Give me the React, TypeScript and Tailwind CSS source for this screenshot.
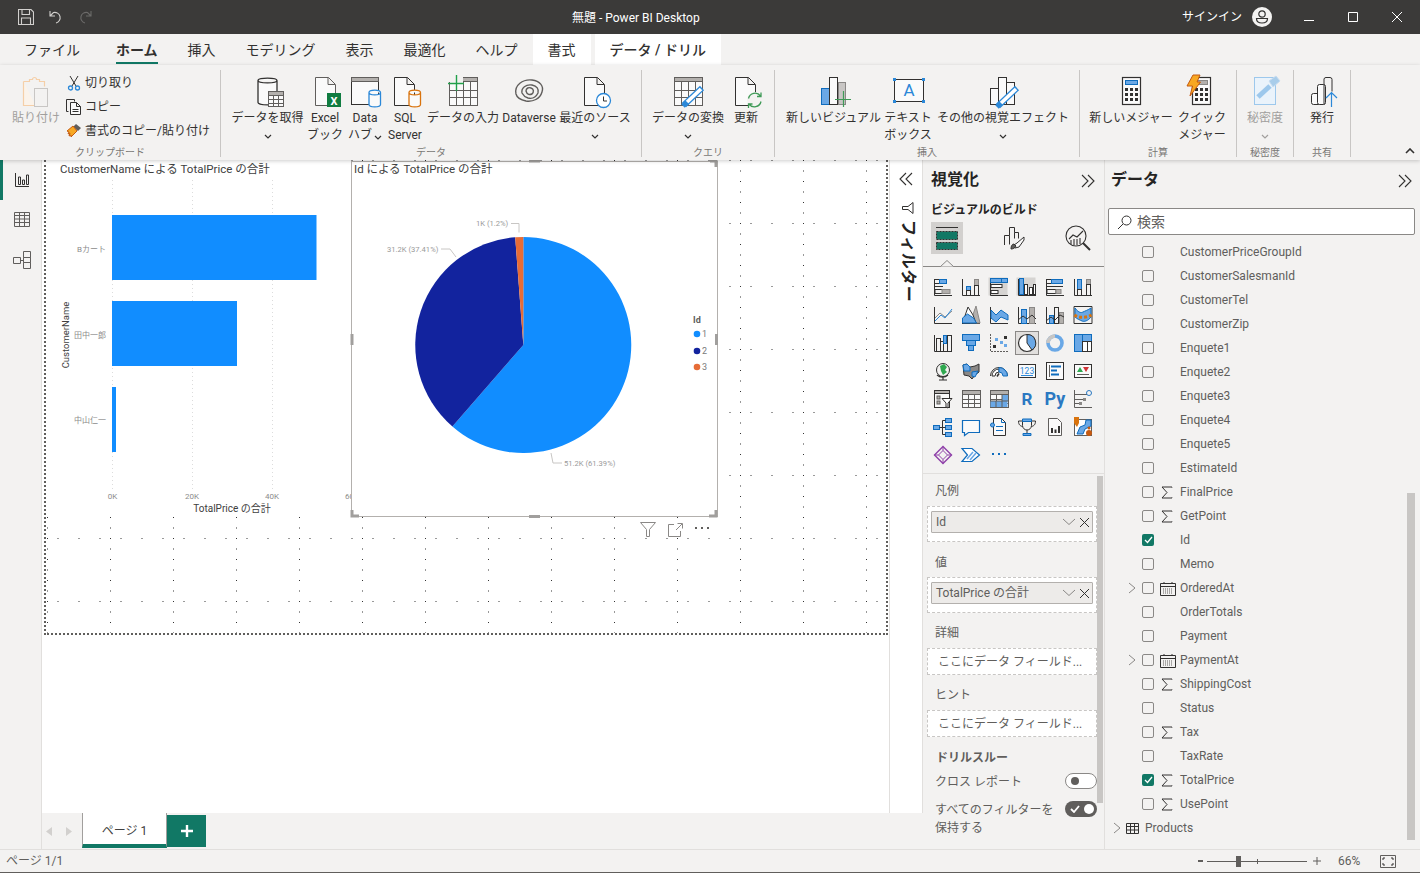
import React from 'react';

const D = '#323130';
const B = '#6aa8e6';
const G = '#b3b0ad';
const A = '#0f6cbd';

const R = ({ x, y, w, h, f = 'none', s }: { x: number; y: number; w: number; h: number; f?: string; s?: string }) => (
  <rect x={x} y={y} width={w} height={h} fill={f} stroke={s} />
);

const Ic = ({ children, size = 32, box = 32, className = '' }: { children: React.ReactNode; size?: number; box?: number; className?: string }) => (
  <svg viewBox={`0 0 ${box} ${box}`} width={size} height={size} fill="none" stroke={D} strokeWidth={1} overflow="visible" className={className}>
    {children}
  </svg>
);

const Doc = ({ x = 5, r = 26, s = D }: { x?: number; r?: number; s?: string }) => (
  <path d={`M${x + 0.5} 1.5h${r - x - 8}l7 7v21h-${r - x - 1}zM${r - 8} 1.5v7h7`} fill="#fafafa" stroke={s} />
);

const Cyl = ({ x, y, w, h, c }: { x: number; y: number; w: number; h: number; c: string }) => (
  <path
    d={`M${x} ${y + 2.5}c0-3.2 ${w}-3.2 ${w} 0v${h - 5}c0 3.2-${w} 3.2-${w} 0zM${x} ${y + 2.5}c0 3.2 ${w} 3.2 ${w} 0`}
    fill="#fafafa"
    stroke={c}
    strokeWidth={1.3}
  />
);

const Tbl = ({ x, y, w, h, c = 4, r = 3, bar = true }: { x: number; y: number; w: number; h: number; c?: number; r?: number; bar?: boolean }) => (
  <g stroke="#605e5c">
    <rect x={x + 0.5} y={y + 0.5} width={w} height={h} fill="#fafafa" />
    {bar && <rect x={x + 0.5} y={y + 0.5} width={w} height={4} fill={G} />}
    {Array.from({ length: c - 1 }).map((_, i) => (
      <path key={i} d={`M${Math.round(x + ((i + 1) * w) / c) + 0.5} ${y + (bar ? 5 : 0)}V${y + h}`} />
    ))}
    {Array.from({ length: r - 1 }).map((_, i) => (
      <path key={i} d={`M${x} ${Math.round(y + (bar ? 5 : 0) + ((i + 1) * (h - (bar ? 5 : 0))) / r) + 0.5}H${x + w}`} />
    ))}
  </g>
);

const Pencil = ({ x1, y1, x2, y2 }: { x1: number; y1: number; x2: number; y2: number }) => (
  <g strokeLinecap="butt">
    <path d={`M${x1} ${y1}L${x2} ${y2}`} stroke="#2b88d8" strokeWidth={6} />
    <path d={`M${x1 + 1} ${y1 - 1}L${x2 - 1} ${y2 + 1}`} stroke="#ffffff" strokeWidth={3.6} />
    <path d={`M${x1 - 1} ${y1 + 1}L${x1 + 3} ${y1 - 3}`} stroke="#2b88d8" strokeWidth={5} />
  </g>
);

const Calc = ({ x, blue }: { x: number; blue: boolean }) => (
  <g>
    <rect x={x + 0.5} y={1.5} width={18} height={27} fill="#fafafa" stroke={D} strokeWidth={1.2} />
    <rect x={x + 3.5} y={4.5} width={12} height={4} fill={blue ? B : G} stroke={blue ? A : '#8a8886'} />
    {[12, 17, 22].map((yy) =>
      [3, 8, 13].map((xx) => <rect key={`${xx}${yy}`} x={x + xx} y={yy} width={3} height={3} fill={D} stroke="none" />)
    )}
  </g>
);

const icons: Record<string, React.ReactNode> = {
  paste: (
    <Ic>
      <path d="M3.5 5.5h6v-2h3a2 2 0 0 1 4 0h3v2h5v5" stroke="#f5cfa8" strokeWidth={1.2} />
      <path d="M3.5 5.5v24h12" stroke="#f5cfa8" strokeWidth={1.2} fill="#fbf3ea" />
      <rect x={14.5} y={12.5} width={13} height={18} fill="#f3f2f1" stroke="#c8c6c4" />
    </Ic>
  ),
  getData: (
    <Ic>
      <Cyl x={6} y={2} w={19} h={27} c={D} />
      <Tbl x={16} y={15} w={15} h={15} c={3} r={3} />
    </Ic>
  ),
  excel: (
    <Ic>
      <Doc x={6} r={27} s="#605e5c" />
      <rect x={18} y={17} width={14} height={14} fill="#107c41" stroke="none" />
      <text x={25} y={28.5} fill="#fff" stroke="none" fontSize={11} fontWeight={700} textAnchor="middle">X</text>
    </Ic>
  ),
  hub: (
    <Ic>
      <rect x={2.5} y={1.5} width={27} height={27} fill="#fafafa" stroke={D} />
      <rect x={2.5} y={1.5} width={27} height={4} fill={G} stroke="#605e5c" />
      <Cyl x={20} y={14} w={11.5} h={17} c="#2b88d8" />
    </Ic>
  ),
  sql: (
    <Ic>
      <Doc x={5} r={26} />
      <Cyl x={20} y={14} w={11.5} h={17} c="#d9730d" />
    </Ic>
  ),
  enter: (
    <Ic>
      <Tbl x={2} y={1} w={28} h={28} c={4} r={3} />
      <rect x={1} y={0} width={15} height={6} fill="#f3f2f1" stroke="none" />
      <path d="M9.500 -1v16M1 7.500h16" stroke="#21a04a" strokeWidth={1.4} />
    </Ic>
  ),
  dataverse: (
    <Ic>
      <path
        d="M3 18C1 9 10 3 19 4c8 1 12 6 10 12-2 7-9 10-16 9-5-1-9-3-10-7zM9 17c-1-5 4-9 10-8 5 1 7 4 6 8-2 4-6 6-10 5-3-1-5-3-6-5zM13 15c0-3 3-4 5-3 3 1 3 4 1 6-2 1-5 1-6-3z"
        stroke="#605e5c"
        strokeWidth={1.4}
      />
    </Ic>
  ),
  recent: (
    <Ic>
      <Doc />
      <circle cx={24.5} cy={24.5} r={7} fill="#fff" stroke="#2b88d8" strokeWidth={1.3} />
      <path d="M24.5 20.5v4.5h3.5" stroke={D} />
    </Ic>
  ),
  transform: (
    <Ic>
      <Tbl x={2} y={1} w={28} h={28} c={4} r={3} />
      <Pencil x1={12} y1={29} x2={30} y2={12} />
    </Ic>
  ),
  refresh: (
    <Ic>
      <Doc />
      <circle cx={25} cy={24} r={8} fill="#f3f2f1" stroke="none" />
      <path d="M18.5 22.5a6.7 6.7 0 0 1 12-2.5M31 25.5a6.7 6.7 0 0 1-12 2.500M31 16.500v4h-4M18.500 32v-4h4" stroke="#3f9a57" strokeWidth={1.3} />
    </Ic>
  ),
  newVisual: (
    <Ic>
      <rect x={3.500} y={12.500} width={8} height={16} fill={B} stroke={A} />
      <rect x={20.500} y={6.500} width={7} height={22} fill="#c8c6c4" stroke="#8a8886" />
      <rect x={11.500} y={1.500} width={8} height={27} fill="#fafafa" stroke={D} />
      <path d="M25.500 15v16M17 23.500h16" stroke="#3f9a57" strokeWidth={1.2} />
    </Ic>
  ),
  textbox: (
    <Ic>
      <rect x={2.500} y={3.500} width={29} height={22} fill="#fafafa" stroke={D} />
      {[[1, 2], [30, 2], [1, 24], [30, 24]].map(([x, y]) => (
        <rect key={`${x}${y}`} x={x} y={y} width={3} height={3} fill="#2b88d8" stroke="none" />
      ))}
      <text x={17} y={20} fill="#2b88d8" stroke="none" fontSize={17} textAnchor="middle">A</text>
    </Ic>
  ),
  other: (
    <Ic>
      <rect x={3.500} y={12.500} width={8} height={16} fill="#fafafa" />
      <rect x={19.500} y={6.500} width={8} height={22} fill="#fafafa" />
      <rect x={11.500} y={1.500} width={8} height={27} fill="#fafafa" />
      <Pencil x1={11} y1={30} x2={30} y2={12} />
    </Ic>
  ),
  measure: (
    <Ic>
      <Calc x={7} blue />
    </Ic>
  ),
  quick: (
    <Ic>
      <Calc x={6} blue={false} />
      <path d="M7 -1h7l-3 7h3.500L4 20l2.500-10H1z" fill="#f7a823" stroke="#c55a11" />
    </Ic>
  ),
  sensitivity: (
    <Ic>
      <rect x={5.500} y={1.500} width={21} height={27} fill="#eaf3fb" stroke="#9dc8ec" />
      <path d="M9 21L21 10" stroke="#9dc8ec" strokeWidth={5} />
      <path d="M20 5l7-5 4 5-7 6z" fill="#a9cdea" stroke="#c7ddf0" />
    </Ic>
  ),
  publish: (
    <Ic>
      <rect x={5.500} y={17.500} width={9} height={11} rx={2} fill="#fafafa" />
      <rect x={11.500} y={8.500} width={8} height={20} rx={2} fill="#fafafa" />
      <path d="M18 28.500V3a2 2 0 0 1 2-1.500h4a2 2 0 0 1 2 2v12" />
      <path d="M25.500 31V17M20 22l5.500-5.500L31 22" stroke="#2b88d8" strokeWidth={1.2} fill="none" />
    </Ic>
  ),
};

const RBtn = ({ w, lines, icon, chevron, dim }: { w: number; lines: string[]; icon: string; chevron?: 'below' | 'inline'; dim?: boolean }) => (
  <div style={{ width: w }} className={`flex flex-col items-center shrink-0 pt-[6px] ${dim ? 'text-[#a19f9d]' : 'text-[#323130]'}`}>
    <div className="h-[34px] w-[32px] shrink-0">{icons[icon]}</div>
    {lines.map((l, i) => (
      <div key={l} className="whitespace-nowrap text-[12px] leading-[17px] flex items-center">
        {l}
        {chevron === 'inline' && i === lines.length - 1 && <Chev cls="ml-[2px] mt-[3px]" />}
      </div>
    ))}
    {chevron === 'below' && (
      <div className="h-[17px] flex items-center">
        <Chev cls="mt-[2px]" c={dim ? '#a19f9d' : '#323130'} />
      </div>
    )}
  </div>
);

const Chev = ({ cls = '', c = '#323130' }: { cls?: string; c?: string }) => (
  <svg width="8" height="5" viewBox="0 0 8 5" fill="none" stroke={c} strokeWidth={1.2} className={cls}>
    <path d="M1 1l3 3 3-3" />
  </svg>
);

const RGroup = ({ w, pl = 0, label, children }: { w: number; pl?: number; label: string; children: React.ReactNode }) => (
  <div style={{ width: w }} className="h-[87px] shrink-0 flex flex-col border-r border-[#c8c6c4]">
    <div style={{ paddingLeft: pl }} className="flex h-[77px] shrink-0">
      {children}
    </div>
    <div className="text-center text-[10px] leading-[11px] text-[#797775] whitespace-nowrap">{label}</div>
  </div>
);

const DblChev = ({ cls = '', flip = false }: { cls?: string; flip?: boolean }) => (
  <svg width="16" height="14" viewBox="0 0 16 14" fill="none" stroke={D} strokeWidth={1.1} className={cls} style={flip ? { transform: 'scaleX(-1)' } : undefined}>
    <path d="M2 1l6 6-6 6M8 1l6 6-6 6" />
  </svg>
);

const I = ({ children }: { children: React.ReactNode }) => (
  <svg viewBox="0 0 20 20" width={20} height={20} fill="none" stroke={D} strokeWidth={1} overflow="visible">
    {children}
  </svg>
);

const Axis = () => <path d="M1.500 2v16.500H19" />;

const gallery: React.ReactNode[] = [
  <I><Axis /><R x={1.500} y={2.500} w={5} h={4} /><R x={6.500} y={2.500} w={7} h={4} f={B} s={A} /><path d="M2 9.500h8" /><R x={2} y={12.500} w={8} h={4} /><R x={9} y={12.500} w={8} h={4} f={G} s="#8a8886" /></I>,
  <I><Axis /><R x={5.500} y={9.500} w={4} h={4} f={B} s={A} /><R x={5.500} y={13.500} w={4} h={5} /><R x={13.500} y={2.500} w={4} h={6} f={G} s="#8a8886" /><R x={13.500} y={8.500} w={4} h={10} /></I>,
  <I><rect x={-0.500} y={0.500} width={19} height={18} fill="#d6d4d2" stroke="none" /><Axis /><R x={1.500} y={1.500} w={11} h={4} f={B} s={A} /><R x={12.500} y={1.500} w={6} h={4} f={B} s={A} /><R x={2} y={7.500} w={11} h={3} f="#fff" /><R x={2} y={13.500} w={7} h={3} f="#fff" /></I>,
  <I><rect x={-0.500} y={0.500} width={19} height={18} fill="#d6d4d2" stroke="none" /><Axis /><R x={2.500} y={1.500} w={4} h={16} f={B} s={A} /><R x={7.500} y={7.500} w={3} h={10} f="#fff" /><R x={12.500} y={10.500} w={3} h={7} f="#fff" /><R x={16.500} y={7.500} w={2} h={10} f="#fff" /></I>,
  <I><Axis /><R x={1.500} y={2.500} w={5} h={4} /><R x={6.500} y={2.500} w={11} h={4} f={B} s={A} /><path d="M2 9.500h16" /><R x={2} y={12.500} w={9} h={4} /><R x={11} y={12.500} w={5} h={4} f={G} s="#8a8886" /></I>,
  <I><Axis /><R x={4.500} y={2.500} w={4} h={10} f={B} s={A} /><R x={4.500} y={12.500} w={4} h={6} /><R x={13.500} y={2.500} w={4} h={5} f={G} s="#8a8886" /><R x={13.500} y={7.500} w={4} h={11} /></I>,
  <I><Axis /><path d="M2 13l5-5 5 4 7-6" stroke="#8a8886" /><path d="M2 16l6-6 4 3 7-9" stroke="#2b88d8" /></I>,
  <I><path d="M1 18.500h18" /><path d="M9 18l6-17 4 17z" fill={G} stroke="#8a8886" /><path d="M1.500 18L7 2l5 8 3 8z" fill="#fff" /><path d="M1.500 18v-5l5-4 6 4 3 5z" fill={B} stroke={A} /></I>,
  <I><Axis /><path d="M2 5l5 5 5-5 7 5v5l-7-3-5 5-5-4z" fill={B} stroke={A} /></I>,
  <I><Axis /><R x={4.500} y={4.500} w={5} h={14} f={B} s={A} /><R x={12.500} y={2.500} w={5} h={16} f={G} s="#8a8886" /><path d="M1 15l5-4 4 3 5-4 4 4" /></I>,
  <I><Axis /><R x={4.500} y={10.500} w={4} h={8} f={B} s={A} /><R x={9.500} y={2.500} w={4} h={16} /><R x={14.500} y={7.500} w={4} h={11} f={G} s="#8a8886" /><path d="M1 16l5-4 4 3 5-5 4 2" /></I>,
  <I><path d="M1 1.500h18v17H1z" /><path d="M2 3c4 5 6 5 8 4s5-2 8-4v9c-3 4-7 5-9 4s-5-2-7-4z" fill={B} stroke={A} /><path d="M1.500 10c4 3 12 3 17 0" stroke="#d9730d" strokeWidth={3} strokeDasharray="3 2" /></I>,
  <I><Axis /><R x={3.500} y={5.500} w={4} h={13} /><R x={7.500} y={8.500} w={3} h={10} /><R x={10.500} y={2.500} w={3} h={8} f={B} s={A} /><R x={14.500} y={2.500} w={4} h={16} /></I>,
  <I><R x={1.500} y={1.500} w={17} h={6} f={B} s={A} /><R x={5.500} y={7.500} w={9} h={5} f={B} s={A} /><R x={7.500} y={12.500} w={5} h={5} f={B} s={A} /></I>,
  <I><path d="M1.500 1v17.500H19" stroke="#605e5c" strokeDasharray="2 1" /><rect x={4} y={12} width={3} height={3} fill={D} stroke="none" /><rect x={6} y={5} width={3} height={3} fill={B} stroke="none" /><rect x={11} y={8} width={3} height={3} fill={B} stroke="none" /><rect x={15} y={3} width={3} height={3} fill={D} stroke="none" /><rect x={15} y={11} width={3} height={3} fill={B} stroke="none" /></I>,
  <I><circle cx={10} cy={10} r={8.500} fill="#fff" stroke="#323130" strokeWidth={1.200} /><path d="M10 10V1.500A8.500 8.500 0 0 1 15 17z" fill={B} stroke={D} /></I>,
  <I><circle cx={10} cy={10} r={7} stroke={B} strokeWidth={3.600} /><path d="M3 10a7 7 0 0 1 7-7" stroke="#c8c6c4" strokeWidth={3.600} /></I>,
  <I><R x={1.500} y={1.500} w={8} h={17} f={B} s={A} /><R x={9.500} y={1.500} w={9} h={7} f={B} s={A} /><R x={9.500} y={8.500} w={5} h={10} f="#fff" s={D} /><R x={14.500} y={8.500} w={4} h={10} f="#fff" s={D} /></I>,
  <I><circle cx={10} cy={9} r={6.500} /><path d="M7 5l4-2 3 3-2 3 2 2-4 3-2-4z" fill="#2fa84f" stroke="none" /><path d="M4 14a8 8 0 0 0 11 0M10 16v2.500M6 19h8" strokeWidth={1.200} /></I>,
  <I><path d="M2 4l4-1 3 3 5-1 4-2v8l-4 3-3 4-3-3-5-1z" fill="#8a8886" stroke={D} /><path d="M2 4l4-1 3 3v4H3zM11 11l6-1-3 6-3-1z" fill={B} stroke={A} /></I>,
  <I><path d="M1.500 15a8.500 8.500 0 0 1 17 0" strokeWidth={1} /><path d="M3 15a7 7 0 0 1 7-7v3a4 4 0 0 0-4 4z" fill="#fff" /><path d="M10 6.500a8.500 8.500 0 0 1 8.500 8.500H14a4 4 0 0 0-4-4z" fill={B} stroke={A} /><path d="M8 15.500l2-3" strokeWidth={1.500} /></I>,
  <I><R x={1.500} y={3.500} w={17} h={13} f="#fafafa" /><text x={10} y={13} fontSize={8.500} fill="#2b88d8" stroke="none" textAnchor="middle">123</text><path d="M4 14.500h12" stroke="#2b88d8" /></I>,
  <I><R x={1.500} y={1.500} w={17} h={17} f="#fafafa" /><path d="M4.500 4v12" stroke="#605e5c" /><path d="M6 5.500h10M6 9.500h6M6 13.500h8" stroke={A} strokeWidth={2} /></I>,
  <I><R x={1.500} y={3.500} w={17} h={13} f="#fafafa" /><path d="M4 11l3-5 3 5z" fill="#2fa84f" stroke="none" /><path d="M10 6h6l-3 5z" fill="#d13438" stroke="none" /><path d="M4 13.500h12" stroke="#605e5c" /></I>,
  <I><R x={1.500} y={1.500} w={15} h={17} f="#fafafa" /><R x={1.500} y={1.500} w={15} h={3} f={G} /><R x={4} y={7} w={3} h={3} f={G} s="#605e5c" /><R x={4} y={12} w={3} h={3} f={G} s="#605e5c" /><path d="M9 9.500h10l-4 4.500v5l-2-1v-4z" fill="#fff" /></I>,
  <I><Tbl x={1} y={1} w={18} h={17} c={3} r={3} /></I>,
  <I><Tbl x={1} y={1} w={18} h={17} c={3} r={3} /><rect x={13} y={6} width={6} height={6} fill={B} stroke="none" /><rect x={1.500} y={12} width={17} height={6} fill={B} stroke="none" /><path d="M7 12v6M13 6v12M1 12h18" stroke="#605e5c" /></I>,
  <span className="text-[17px] leading-none font-bold text-[#2b79c2]">R</span>,
  <span className="text-[18px] leading-none font-bold text-[#2b79c2]">Py</span>,
  <I><path d="M1.500 1v17.500H19M2 5.500h12M2 10.500h9M2 14.500h5" stroke="#605e5c" /><circle cx={16} cy={4} r={2.500} stroke="#2b79c2" /><rect x={10} y={9} width={3} height={3} fill="#8a8886" stroke="none" /><rect x={6} y={13} width={3} height={3} fill="#8a8886" stroke="none" /></I>,
  <I><R x={0.500} y={8.500} w={6} h={4} f={B} s={A} /><R x={12.500} y={1.500} w={6} h={4} f={B} s={A} /><R x={12.500} y={8.500} w={6} h={4} f={B} s={A} /><R x={12.500} y={15.500} w={6} h={4} f={B} s={A} /><path d="M6.500 10.500h6M9.500 3.500v14M9.500 3.500h3M9.500 17.500h3" stroke={D} /></I>,
  <I><path d="M1.500 3.500h17v12H7.500l-4 3v-3h-2z" fill="#fafafa" stroke={A} strokeWidth={1.200} /></I>,
  <I><path d="M4.500 1.500h8l4 4v13h-12z" fill="#fafafa" /><path d="M12.500 1.500v4h4M7 9.500h7M7 13.500h7" stroke={A} /><circle cx={3.500} cy={8} r={2} fill={B} stroke={A} /></I>,
  <I><path d="M5.500 2.500h9v6a4.500 4.500 0 0 1-9 0zM5 4H1.500c0 4 2 5 4 5.500M15 4h3.500c0 4-2 5-4 5.500M10 13v3" /><path d="M5.500 2h9v2.500h-9zM6 16.500h8v2H6z" fill={B} stroke={A} /></I>,
  <I><path d="M3.500 1.500h9l4 4v13h-13z" fill="#fafafa" stroke="#605e5c" /><path d="M6 11h2v5H6zM9.500 12.500h2V16h-2zM13 9h2v7h-2z" fill={D} stroke="none" /></I>,
  <I><R x={1.500} y={2.500} w={17} h={16} f="#fff" s="#605e5c" /><path d="M4 17l3-7 5-2 1-5h5v6l-6 3-2 5z" fill={B} stroke={A} /><path d="M1 0h5v6l-2 4-3-4z" fill="#d9730d" stroke="none" /><circle cx={16} cy={16} r={3} fill="#c55a11" stroke="none" /><circle cx={16} cy={11} r={1.500} fill="#c55a11" stroke="none" /></I>,
  <I><path d="M10 1.500l8.500 8.500-8.500 8.500L1.500 10z" stroke="#8e3fa8" strokeWidth={1.400} /><path d="M10 5.500l4.500 4.500-4.500 4.500L5.500 10z M10 1.500v4M10 14.500v4M1.500 10h4M14.500 10h4" stroke="#8e3fa8" /></I>,
  <I><path d="M1 3.500h10l7.500 6.500-7.500 6.500H1l5.500-6.500z" fill="#fff" stroke={A} strokeWidth={1.200} /><path d="M6 14l6-7M9 15l6-7" stroke={B} strokeWidth={1.600} /></I>,
  <I><g fill="#0f6cbd" stroke="none"><rect x={3} y={8} width={2} height={2} /><rect x={9} y={8} width={2} height={2} /><rect x={15} y={8} width={2} height={2} /></g></I>,
];

const Well = ({ item }: { item: string }) => (
  <div className="h-[36px] w-[170px] border border-dashed border-[#c8c6c4] bg-white pt-[4px] px-[3px]">
    <div className="h-[22px] bg-[#edebe9] border border-[#b3b0ad] rounded-[1px] flex items-center pl-[4px] pr-[2px] text-[12px] text-[#605e5c]">
      <span className="flex-1">{item}</span>
      <svg width="14" height="8" viewBox="0 0 14 8" fill="none" stroke="#8a8886" className="mr-[3px]">
        <path d="M1 1l6 5.500L13 1" />
      </svg>
      <svg width="11" height="11" viewBox="0 0 11 11" fill="none" stroke={D}>
        <path d="M1 1l9 9M10 1l-9 9" />
      </svg>
    </div>
  </div>
);

const EmptyWell = () => (
  <div className="h-[27px] w-[170px] border border-dashed border-[#c8c6c4] bg-white pl-[10px] pt-px flex items-center text-[12px] text-[#605e5c] whitespace-nowrap">
    ここにデータ フィールド...
  </div>
);

const Sect = ({ cls, children }: { cls: string; children: React.ReactNode }) => (
  <div className={`text-[12px] leading-[14px] text-[#605e5c] ${cls}`}>{children}</div>
);

const Sigma = () => (
  <svg width="12" height="13" viewBox="0 0 12 13" fill="none" stroke={D} strokeWidth={1}>
    <path d="M11 1.500V1H1l5 5.500L1 12h10v-.500" />
  </svg>
);

const Cal = () => (
  <svg width="16" height="15" viewBox="0 0 16 15" fill="none" stroke={D} strokeWidth={1}>
    <path d="M.500 2.500h15v12H.500zM.500 5.500h15M4 1v2M12 1v2" />
    <path d="M3 8h10M3 10h10M3 12h10" stroke="#605e5c" strokeDasharray="1 1" />
  </svg>
);

const Arrow = () => (
  <svg width="8" height="12" viewBox="0 0 8 12" fill="none" stroke="#8a8886" strokeWidth={1}>
    <path d="M1 1l6 5-6 5" />
  </svg>
);

type Field = { n: string; icon?: 'sigma' | 'cal'; on?: boolean; exp?: boolean };

const fields: Field[] = [
  { n: 'CustomerPriceGroupId' },
  { n: 'CustomerSalesmanId' },
  { n: 'CustomerTel' },
  { n: 'CustomerZip' },
  { n: 'Enquete1' },
  { n: 'Enquete2' },
  { n: 'Enquete3' },
  { n: 'Enquete4' },
  { n: 'Enquete5' },
  { n: 'EstimateId' },
  { n: 'FinalPrice', icon: 'sigma' },
  { n: 'GetPoint', icon: 'sigma' },
  { n: 'Id', on: true },
  { n: 'Memo' },
  { n: 'OrderedAt', icon: 'cal', exp: true },
  { n: 'OrderTotals' },
  { n: 'Payment' },
  { n: 'PaymentAt', icon: 'cal', exp: true },
  { n: 'ShippingCost', icon: 'sigma' },
  { n: 'Status' },
  { n: 'Tax', icon: 'sigma' },
  { n: 'TaxRate' },
  { n: 'TotalPrice', icon: 'sigma', on: true },
  { n: 'UsePoint', icon: 'sigma' },
];

const FieldRow = ({ f }: { f: Field }) => (
  <div className="h-6 flex items-center text-[12px] text-[#605e5c]">
    <div className="w-[37px] pl-[23px] flex items-center">{f.exp && <Arrow />}</div>
    {f.on ? (
      <div className="w-3 h-3 rounded-[2px] bg-[#117865] flex items-center justify-center">
        <svg width="9" height="8" viewBox="0 0 9 8" fill="none" stroke="#fff" strokeWidth={1.300}>
          <path d="M1 4l2.500 2.500L8 1" />
        </svg>
      </div>
    ) : (
      <div className="w-3 h-3 rounded-[2px] border border-[#8a8886]" />
    )}
    <div className="w-[26px] flex items-center pl-[6px]">
      {f.icon === 'sigma' && <span className="pl-[1px] flex"><Sigma /></span>}
      {f.icon === 'cal' && <Cal />}
    </div>
    <span>{f.n}</span>
  </div>
);

const BarChart = () => (
  <svg viewBox="46 160 305 357" className="absolute inset-0 w-full h-full" fontFamily="Roboto,'Noto Sans CJK JP',sans-serif">
    {[112, 192, 272].map((x) => (
      <path key={x} d={`M${x + 0.500} 180V490`} stroke="#dcdcdc" strokeDasharray="1 3" />
    ))}
    <rect x={112} y={215} width={204.500} height={65} fill="#118DFF" />
    <rect x={112} y={301} width={125} height={65} fill="#118DFF" />
    <rect x={112} y={387} width={4} height={65} fill="#118DFF" />
    <g fontSize={8} fill="#8c8c8c" textAnchor="end">
      <text x={106} y={252}>Bカート</text>
      <text x={106} y={338}>田中一郎</text>
      <text x={106} y={423}>中山仁一</text>
    </g>
    <g fontSize={8} fill="#8c8c8c" textAnchor="middle">
      <text x={112.500} y={499}>0K</text>
      <text x={192} y={499}>20K</text>
      <text x={272} y={499}>40K</text>
      <text x={352} y={499}>60K</text>
    </g>
    <text x={232} y={512} fontSize={10} fill="#404040" textAnchor="middle">TotalPrice の合計</text>
    <text transform="translate(69 335) rotate(-90)" fontSize={9.500} fill="#404040" textAnchor="middle">CustomerName</text>
  </svg>
);

const PieChart = () => (
  <svg viewBox="351 160 368 358" className="absolute -left-px -top-[2px] w-[368px] h-[358px]" overflow="visible" fontFamily="Roboto,'Noto Sans CJK JP',sans-serif">
    <path d="M523.300 345V237A108 108 0 1 1 452.400 426.500Z" fill="#118DFF" />
    <path d="M523.300 345L452.400 426.500A108 108 0 0 1 515.200 237.300Z" fill="#12239E" />
    <path d="M523.300 345L515.200 237.300A108 108 0 0 1 523.300 237Z" fill="#E66C37" />
    <g fontSize={7.600} fill="#9a9a9a">
      <text x={476} y={226}>1K (1.2%)</text>
      <text x={387} y={252}>31.2K (37.41%)</text>
      <text x={564} y={466}>51.2K (61.39%)</text>
    </g>
    <g fill="none" stroke="#c8c6c4">
      <path d="M511 223.500h8v9" />
      <path d="M441 249h9l6 8" />
      <path d="M551 453l2 10h9" />
    </g>
    <text x={693} y={323} fontSize={9} fontWeight={700} fill="#605e5c">Id</text>
    {[[334, '#118DFF', '1'], [351, '#12239E', '2'], [367, '#E66C37', '3']].map(([y, c, t]) => (
      <g key={t as string}>
        <circle cx={697} cy={y as number} r={3.300} fill={c as string} />
        <text x={702} y={(y as number) + 3} fontSize={9} fill="#7a7a7a">{t}</text>
      </g>
    ))}
    <g fill="none" stroke="#a19f9d" strokeWidth={3}>
      <path d="M352 510v6h7M709 516h7v-6M710 161h6v6" />
      <path d="M529 161h11M529 516.500h11M352 334v11M716.500 334v11" />
    </g>
  </svg>
);

export default function App() {
  return (
    <div className="h-screen w-full overflow-hidden flex flex-col bg-[#f3f2f1] font-['Roboto','Noto_Sans_CJK_JP',sans-serif] text-[#323130]">
      {/* title bar */}
      <div className="h-[34px] shrink-0 bg-[#3b3a39] flex items-center relative text-white">
        <div className="flex items-center pl-[18px] gap-[15px]">
          <svg width="16" height="16" viewBox="0 0 16 16" fill="none" stroke="#d2d0ce" strokeWidth={1.100}>
            <path d="M.500 .500h12.500l2.500 2.500v12.500H.500zM4 .500v5h7.500v-5M3.500 15.500v-6.500h9v6.500" />
          </svg>
          <svg width="14" height="15" viewBox="0 0 14 15" fill="none" stroke="#d2d0ce" strokeWidth={1.100}>
            <path d="M1 1v5h5M1 6l3.500-3.500a5 5 0 1 1 2.500 10.500" />
          </svg>
          <svg width="14" height="15" viewBox="0 0 14 15" fill="none" stroke="#6b6a69" strokeWidth={1.100}>
            <path d="M13 1v5H8M13 6L9.500 2.500A5 5 0 1 0 7 13" />
          </svg>
        </div>
        <div className="absolute left-[572px] top-[9px] leading-[18px] text-[12px] whitespace-nowrap">無題 - Power BI Desktop</div>
        <div className="ml-auto flex items-center">
          <span className="text-[12px] mr-[10px]">サインイン</span>
          <svg width="20" height="20" viewBox="0 0 20 20" className="mr-[32px]">
            <circle cx="10" cy="10" r="10" fill="#f3f2f1" />
            <circle cx="10" cy="7" r="3.200" fill="none" stroke="#323130" strokeWidth={1.200} />
            <path d="M4.500 11.500h11c0 3-2.500 4.500-5.500 4.500s-5.500-1.500-5.500-4.500z" fill="none" stroke="#323130" strokeWidth={1.200} />
          </svg>
          <svg width="10" height="10" viewBox="0 0 10 10" stroke="#fff" className="mr-[34px]"><path d="M0 8.500h10" /></svg>
          <svg width="10" height="10" viewBox="0 0 10 10" stroke="#fff" fill="none" className="mr-[34px]"><path d="M.500 .500h9v9h-9z" /></svg>
          <svg width="10" height="10" viewBox="0 0 10 10" stroke="#fff" className="mr-[18px]"><path d="M0 0l10 10M10 0L0 10" /></svg>
        </div>
      </div>

      {/* tabs */}
      <div className="h-[31px] shrink-0 flex items-stretch text-[14px] pl-[9px] text-[#323130]">
        <div className="px-[15px] pt-[2px] flex items-center">ファイル</div>
        <div className="ml-[6px] px-[15px] pt-[2px] flex items-center font-bold relative">
          ホーム
          <div className="absolute left-[15px] right-[15px] bottom-[1px] h-[2px] bg-[#117865]" />
        </div>
        {['挿入', 'モデリング', '表示', '最適化', 'ヘルプ'].map((t) => (
          <div key={t} className="px-[15px] pt-[2px] flex items-center">{t}</div>
        ))}
        <div className="px-[15px] pt-[2px] flex items-center bg-white">書式</div>
        <div className="ml-[4px] px-[15px] pt-[2px] flex items-center bg-white font-medium">データ / ドリル</div>
      </div>

      {/* ribbon */}
      <div className="h-[95px] shrink-0 flex pt-[5px] relative z-10 shadow-[0_1px_4px_rgba(0,0,0,0.2)] bg-[#f3f2f1]">
        <RGroup w={221} pl={10} label="クリップボード">
          <RBtn w={52} icon="paste" lines={['貼り付け']} dim />
          <div className="flex flex-col ml-[4px] pt-px text-[12px]">
            <div className="h-6 flex items-center gap-[3px]">
              <svg width="16" height="16" viewBox="0 0 16 16" fill="none" stroke={D}>
                <path d="M4 1l6 10M12 1L6 11" />
                <circle cx="4.500" cy="13" r="2" stroke="#2b88d8" strokeWidth={1.300} />
                <circle cx="11.500" cy="13" r="2" stroke="#2b88d8" strokeWidth={1.300} />
              </svg>
              切り取り
            </div>
            <div className="h-6 flex items-center gap-[3px]">
              <svg width="16" height="16" viewBox="0 0 16 16" fill="none" stroke={D}>
                <path d="M2.500 12.500h-2V.500h8v2" />
                <path d="M4.500 3.500h6l4 4v8h-10zM10.500 3.500v4h4M6.500 10.500h6M6.500 12.500h6" fill="#fafafa" />
              </svg>
              コピー
            </div>
            <div className="h-6 flex items-center gap-[3px]">
              <svg width="16" height="16" viewBox="0 0 16 16" fill="none">
                <path d="M10 1l5 4-3 3-5-4z" fill="#605e5c" />
                <path d="M7 3L1 8l2 1-1 2 2-1-1 3 2-1 0 2 6-6z" fill="#f7a823" stroke="#c55a11" />
              </svg>
              書式のコピー/貼り付け
            </div>
          </div>
        </RGroup>
        <RGroup w={421} pl={10} label="データ">
          <RBtn w={73} icon="getData" lines={['データを取得']} chevron="below" />
          <RBtn w={42} icon="excel" lines={['Excel', 'ブック']} />
          <RBtn w={38} icon="hub" lines={['Data', 'ハブ']} chevron="inline" />
          <RBtn w={42} icon="sql" lines={['SQL', 'Server']} />
          <RBtn w={74} icon="enter" lines={['データの入力']} />
          <RBtn w={58} icon="dataverse" lines={['Dataverse']} />
          <RBtn w={74} icon="recent" lines={['最近のソース']} chevron="below" />
        </RGroup>
        <RGroup w={133} pl={10} label="クエリ">
          <RBtn w={72} icon="transform" lines={['データの変換']} chevron="below" />
          <RBtn w={44} icon="refresh" lines={['更新']} />
        </RGroup>
        <RGroup w={305} pl={10} label="挿入">
          <RBtn w={97} icon="newVisual" lines={['新しいビジュアル']} />
          <RBtn w={52} icon="textbox" lines={['テキスト', 'ボックス']} />
          <RBtn w={138} icon="other" lines={['その他の視覚エフェクト']} chevron="below" />
        </RGroup>
        <RGroup w={157} pl={9} label="計算">
          <RBtn w={84} icon="measure" lines={['新しいメジャー']} />
          <RBtn w={58} icon="quick" lines={['クイック', 'メジャー']} />
        </RGroup>
        <RGroup w={57} label="秘密度">
          <RBtn w={56} icon="sensitivity" lines={['秘密度']} chevron="below" dim />
        </RGroup>
        <RGroup w={57} label="共有">
          <RBtn w={56} icon="publish" lines={['発行']} />
        </RGroup>
        <svg width="10" height="6" viewBox="0 0 10 6" fill="none" stroke={D} strokeWidth={1.600} className="absolute left-[1405px] top-[83px]">
          <path d="M1 5l4-4 4 4" />
        </svg>
      </div>

      {/* main */}
      <div className="flex-1 min-h-0 flex">
        {/* left rail */}
        <div className="w-[42px] shrink-0 border-r border-[#e1dfdd] relative flex flex-col items-center pt-[12px] pl-[2px]">
          <div className="absolute left-0 top-0 w-[3px] h-[40px] bg-[#117865]" />
          <svg width="16" height="16" viewBox="0 0 16 16" fill="none" stroke={D}>
            <path d="M1.500 1v13.500H15M4.500 5v7.500h2V5zM8.500 8v4.500h2V8zM12.500 3v9.500h2V3z" />
          </svg>
          <svg width="16" height="16" viewBox="0 0 16 16" fill="none" stroke="#605e5c" className="mt-[24px]">
            <path d="M.500 .500h15v14h-15zM.500 3.500h15M.500 7h15M.500 10.500h15M5.500 .500v14M10.500 .500v14" />
          </svg>
          <svg width="18" height="18" viewBox="0 0 18 18" fill="none" stroke="#605e5c" className="mt-[23px]">
            <path d="M.500 6.500h7v6h-7zM10.500 .500h7v6h-7zM10.500 6.500h7v5h-7zM10.500 11.500h7v6h-7zM7.500 9.500h3" />
          </svg>
        </div>

        {/* canvas + filter strip + page tabs */}
        <div className="w-[881px] shrink-0 flex flex-col">
          <div className="flex-1 min-h-0 flex bg-white">
            <div className="w-[847px] shrink-0 pl-[2px] overflow-hidden">
              <div className="relative w-[844px] h-[475px] border-x-2 border-b-2 border-dotted border-[#605e5c]">
                <svg className="absolute inset-0 w-full h-full">
                  <defs>
                    <pattern id="dots" x="1" y="0" width="63" height="63" patternUnits="userSpaceOnUse">
                      {[0, 10.500, 21, 31.500, 42, 52.500].map((y) => (
                        <rect key={y} x={0} y={y} width={1} height={1} fill="#333" />
                      ))}
                      {[10.500, 31.500, 52.500].map((x) => (
                        <rect key={x} x={x} y={0} width={1} height={1} fill="#333" />
                      ))}
                    </pattern>
                  </defs>
                  <rect width="100%" height="100%" fill="url(#dots)" />
                </svg>
                <div className="absolute left-0 top-0 w-[305px] h-[357px] bg-white overflow-hidden">
                  <BarChart />
                  <div className="absolute left-[14px] top-[0px] text-[11.500px] leading-[18px] whitespace-nowrap text-[#404040]">
                    CustomerName による TotalPrice の合計
                  </div>
                </div>
                <div className="absolute left-[305px] top-[1px] w-[367px] h-[356px] bg-white border border-[#b3b0ad]">
                  <PieChart />
                  <div className="absolute left-[2px] top-[-2px] text-[11.500px] leading-[18px] whitespace-nowrap text-[#404040]">
                    Id による TotalPrice の合計
                  </div>
                </div>
                <div className="absolute left-[594px] top-[362px] flex items-center gap-[12px] bg-white">
                  <svg width="16" height="15" viewBox="0 0 16 15" fill="none" stroke="#8a8886">
                    <path d="M.500 .500h15L9.500 7.500v7h-3v-7z" />
                  </svg>
                  <svg width="15" height="14" viewBox="0 0 15 14" fill="none" stroke="#8a8886">
                    <path d="M6 1.500H.500v12h12V8M8 7l6-6M9.500 .500h5v5" />
                  </svg>
                  <svg width="15" height="15" viewBox="0 0 15 15" fill="#605e5c">
                    <rect x="0" y="5" width="2" height="2" />
                    <rect x="6" y="5" width="2" height="2" />
                    <rect x="12" y="5" width="2" height="2" />
                  </svg>
                </div>
              </div>
            </div>
            <div className="w-[34px] shrink-0 border-x border-[#e1dfdd] flex flex-col items-center pt-[12px]">
              <DblChev flip />
              <svg width="12" height="12" viewBox="0 0 12 12" fill="none" stroke={D} className="mt-[16px] rotate-90 ml-[4px]">
                <path d="M.500 1h11L7.500 6v5.500h-3V6z" />
              </svg>
              <div className="mt-[6px] ml-[4px] text-[16px] font-bold text-[#252423] tracking-[0.500px] [writing-mode:vertical-rl] [text-orientation:sideways]">フィルター</div>
            </div>
          </div>
          <div className="h-[36px] shrink-0 flex items-start">
            <div className="w-[40px] h-full flex items-center pl-[4px] gap-[14px]">
              <svg width="6" height="9" viewBox="0 0 6 9" fill="#d2d0ce"><path d="M6 0v9L0 4.500z" /></svg>
              <svg width="6" height="9" viewBox="0 0 6 9" fill="#d2d0ce"><path d="M0 0v9l6-4.500z" /></svg>
            </div>
            <div className="w-[85px] h-[35px] bg-white border-x border-[#a19f9d] border-b-[4px] border-b-[#117865] flex items-center justify-center text-[12px] text-[#404040] pt-[4px]">
              ページ 1
            </div>
            <div className="w-[39px] h-[32px] mt-[2px] bg-[#117865] flex items-center justify-center">
              <svg width="12" height="12" viewBox="0 0 12 12" stroke="#fff" strokeWidth={2.400}>
                <path d="M6 0v12M0 6h12" />
              </svg>
            </div>
          </div>
        </div>

        {/* visualizations pane */}
        <div className="w-[182px] shrink-0 border-r border-[#e1dfdd] relative">
          <div className="h-[38px] pt-[2px] flex items-center justify-between pl-[8px] pr-[8px]">
            <span className="text-[16px] font-bold text-[#252423]">視覚化</span>
            <DblChev cls="mt-[1px]" />
          </div>
          <div className="h-[22px] pl-[8px] pt-px flex items-center text-[12px] font-bold text-[#252423]">ビジュアルのビルド</div>
          <div className="mt-[2px] h-[32px] flex items-center pl-[8px]">
            <div className="w-[32px] h-[32px] bg-[#d2d0ce] flex items-center justify-center">
              <svg width="24" height="24" viewBox="0 0 24 24" fill="none">
                <path d="M1 1.500h22" stroke={D} />
                <rect x="1.500" y="5.500" width="21" height="8" fill="#117865" stroke={D} strokeDasharray="2 1" />
                <rect x="1.500" y="16.500" width="21" height="7" fill="#117865" stroke={D} strokeDasharray="2 1" />
              </svg>
            </div>
            <svg width="24" height="24" viewBox="0 0 24 24" fill="none" stroke={D} className="ml-[39px]">
              <path d="M2.500 19V9.500h5V1.500h5v5h4v6" />
              <path d="M7.500 9.500v9M12.500 6.500v6" />
              <path d="M22 11l-7 6-3 2 1 3 4-1 5-7z" fill="#fafafa" />
              <path d="M9 23c2 0 4-1 5-3l-2-2c-2 0-3 2-3 5z" fill="#605e5c" />
            </svg>
            <svg width="26" height="26" viewBox="0 0 26 26" fill="none" stroke={D} strokeWidth={1.100} className="ml-[39px]">
              <circle cx="11" cy="11" r="10" />
              <path d="M18 18l7 7" strokeWidth={2} />
              <path d="M4 14l4-4 4 2 6-6M6 19v-4M9 20v-6M12 20v-6M15 19v-6" />
            </svg>
          </div>
          <div className="mt-[12px] h-px bg-[#8a8886] relative">
            <svg width="18" height="7" viewBox="0 0 18 7" className="absolute left-[15px] -top-[6px]" fill="#f3f2f1" stroke="#8a8886">
              <path d="M0 6.500h2.500L9 .500l6.500 6H18" />
            </svg>
          </div>
          <div className="mt-[6px] ml-[6px] grid grid-cols-[repeat(6,28px)] auto-rows-[28px]">
            {gallery.map((g, i) => (
              <div key={i} className="flex items-center justify-center">
                {i === 15 ? (
                  <div className="w-6 h-6 bg-[#e1dfdd] border border-[#8a8886] flex items-center justify-center">{g}</div>
                ) : (
                  g
                )}
              </div>
            ))}
          </div>
          <div className="mt-[4px] h-px bg-[#e1dfdd]" />
          <div className="pl-[4px]">
            <Sect cls="pt-[10px] pl-[8px]">凡例</Sect>
            <div className="mt-[8px]"><Well item="Id" /></div>
            <Sect cls="mt-[14px] pl-[8px]">値</Sect>
            <div className="mt-[7px]"><Well item="TotalPrice の合計" /></div>
            <Sect cls="mt-[13px] pl-[8px]">詳細</Sect>
            <div className="mt-[8px]"><EmptyWell /></div>
            <Sect cls="mt-[13px] pl-[8px]">ヒント</Sect>
            <div className="mt-[8px]"><EmptyWell /></div>
            <Sect cls="mt-[14px] pl-[9px] font-bold">ドリルスルー</Sect>
            <div className="mt-[8px] h-[16px] w-[170px] pl-[8px] flex items-center justify-between text-[12px] leading-[16px] text-[#605e5c]">
              <span className="pt-[2px]">クロス レポート</span>
              <div className="w-[32px] h-[16px] rounded-full border border-[#8a8886] bg-white flex items-center pl-[5px]">
                <div className="w-[8px] h-[8px] rounded-full bg-[#605e5c]" />
              </div>
            </div>
            <div className="mt-[12px] w-[170px] pl-[8px] flex items-start justify-between text-[12px] leading-[18px] text-[#605e5c]">
              <div>すべてのフィルターを<br />保持する</div>
              <div className="w-[32px] h-[16px] rounded-full bg-[#605e5c] flex items-center justify-between pl-[5px] pr-[3px]">
                <svg width="10" height="8" viewBox="0 0 10 8" fill="none" stroke="#fff" strokeWidth={1.800}>
                  <path d="M1 4l3 3 5-6" />
                </svg>
                <div className="w-[10px] h-[10px] rounded-full bg-white" />
              </div>
            </div>
          </div>
          <div className="absolute left-[174px] top-[316px] w-[6px] h-[327px] bg-[#c8c6c4]" />
        </div>

        {/* data pane */}
        <div className="flex-1 min-w-0 relative">
          <div className="h-[38px] pt-[2px] flex items-center justify-between pl-[6px] pr-[7px]">
            <span className="text-[16px] font-bold text-[#252423]">データ</span>
            <DblChev cls="mt-[1px]" />
          </div>
          <div className="mt-[10px] ml-[3px] w-[307px] h-[27px] bg-white border border-[#8a8886] rounded-[2px] flex items-center pl-[8px] pt-px text-[14px] text-[#605e5c]">
            <svg width="15" height="15" viewBox="0 0 15 15" fill="none" stroke={D} className="mr-[5px]">
              <circle cx="9.500" cy="5.500" r="4.500" />
              <path d="M6 9l-5 5" />
            </svg>
            検索
          </div>
          <div className="mt-[5px]">
            {fields.map((f) => (
              <FieldRow key={f.n} f={f} />
            ))}
            <div className="h-6 flex items-center text-[12px] text-[#605e5c]">
              <div className="pl-[8px] w-[21px] flex"><Arrow /></div>
              <svg width="13" height="11" viewBox="0 0 13 11" fill="none" stroke={D} className="mr-[6px]">
                <path d="M.500 .500h12v10H.500zM.500 3.500h12M.500 7h12M4.500 .500v10M8.500 .500v10" />
              </svg>
              Products
            </div>
          </div>
          <div className="absolute left-[302px] top-[333px] w-[8px] h-[347px] bg-[#c8c6c4]" />
        </div>
      </div>

      {/* status bar */}
      <div className="h-[24px] shrink-0 border-t border-t-[#e1dfdd] border-b border-b-[#605e5c] flex items-center text-[12px] text-[#605e5c] pl-[6px]">
        ページ 1/1
        <div className="ml-auto flex items-center">
          <div className="w-[5px] h-[2px] mr-[4px] bg-[#605e5c]" />
          <div className="w-[100px] h-px bg-[#605e5c] relative">
            <div className="absolute left-[29px] -top-[5px] w-[5px] h-[11px] bg-[#605e5c]" />
            <div className="absolute left-[50px] -top-[2px] w-px h-[5px] bg-[#605e5c]" />
          </div>
          <svg width="8" height="8" viewBox="0 0 8 8" stroke="#605e5c" className="ml-[6px]">
            <path d="M4 0v8M0 4h8" />
          </svg>
          <span className="ml-[17px] w-[24px]">66%</span>
          <svg width="16" height="13" viewBox="0 0 16 13" fill="none" stroke="#605e5c" className="ml-[18px] mr-[24px]">
            <path d="M.500 .500h15v12H.500z" />
            <path d="M3 5V3h2M13 5V3h-2M3 8v2h2M13 8v2h-2" stroke={D} />
          </svg>
        </div>
      </div>
    </div>
  );
}
